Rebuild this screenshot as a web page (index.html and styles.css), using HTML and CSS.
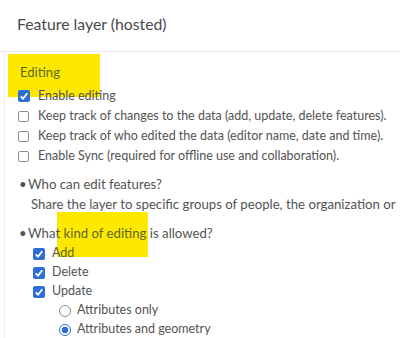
FILE: index.html
```html
<!DOCTYPE HTML>
<html>

<head>
    <meta charset="UTF-8">
    <title>Feature layer settings</title>
    <link rel="stylesheet" href="styles.css">
</head>

<body>
    <div class="title">Feature layer (hosted)</div>

    <div class="panel">
        <div class="section"><span class="hl">Editing</span></div>

        <div class="option">
            <span class="box checked"></span>
            <span>Enable editing</span>
        </div>
        <div class="option">
            <span class="box"></span>
            <span>Keep track of changes to the data (add, update, delete features).</span>
        </div>
        <div class="option">
            <span class="box"></span>
            <span>Keep track of who edited the data (editor name, date and time).</span>
        </div>
        <div class="option">
            <span class="box"></span>
            <span>Enable Sync (required for offline use and collaboration).</span>
        </div>

        <div class="question first">
            <div class="ask"><span class="dot">&bull;</span>Who can edit features?</div>
            <div class="note">Share the layer to specific groups of people, the organization or</div>
        </div>

        <div class="question">
            <div class="ask"><span class="dot">&bull;</span>What <span class="hl">kind of editing</span> is allowed?</div>
            <div class="sub">
                <div class="option">
                    <span class="box checked"></span>
                    <span>A<span class="hl">dd</span></span>
                </div>
                <div class="option">
                    <span class="box checked"></span>
                    <span>Delete</span>
                </div>
                <div class="option">
                    <span class="box checked"></span>
                    <span>Update</span>
                </div>
                <div class="sub">
                    <div class="option">
                        <span class="radio"></span>
                        <span>Attributes only</span>
                    </div>
                    <div class="option">
                        <span class="radio checked"></span>
                        <span>Attributes and geometry</span>
                    </div>
                </div>
            </div>
        </div>
    </div>

    <span class="marker marker-section"></span>
    <span class="marker marker-kind"></span>
</body>

</html>
```

FILE: styles.css
```css
body {
    margin: 0;
    width: 400px;
    height: 338px;
    overflow: hidden;
    position: relative;
    background: #fff;
    color: #535353;
    font-family: Lato, "Noto Sans", sans-serif;
}

.title {
    height: 52px;
    box-sizing: border-box;
    padding: 14px 0 0 17px;
    font-size: 15.8px;
    line-height: 20px;
    color: #4a4a4a;
    border-bottom: 1px solid #e9e9e9;
}

.panel {
    position: relative;
    z-index: 1;
    box-sizing: border-box;
    height: 286px;
    margin-left: 4px;
    padding: 10px 0 0 13px;
    border-left: 1px solid #eeeeee;
}

.hl {
    color: #5c6820;
}

.section {
    font-size: 13.1px;
    line-height: 20px;
    margin: 0 0 3px 2px;
}

.option {
    display: flex;
    align-items: center;
    height: 20px;
    font-size: 12.5px;
    white-space: nowrap;
}

.box {
    box-sizing: border-box;
    width: 11px;
    height: 11px;
    margin: 2px 9px 0 0;
    border: 1px solid #8c8c8c;
    border-radius: 2px;
    flex: none;
}

.box.checked {
    width: 12px;
    height: 12px;
    margin-right: 8px;
    border: none;
    background: #2d6ed8 url("data:image/svg+xml;utf8,<svg xmlns='http://www.w3.org/2000/svg' viewBox='0 0 12 12'><path d='M2.7 6.3 L5 8.6 L9.3 3.3' fill='none' stroke='white' stroke-width='1.8'/></svg>") no-repeat center;
}

.radio {
    box-sizing: border-box;
    width: 12px;
    height: 12px;
    margin: 2px 6px 0 0;
    border: 1px solid #8c8c8c;
    border-radius: 50%;
    flex: none;
}

.radio.checked {
    border-color: #2d6ed8;
    background: radial-gradient(circle, #2d6ed8 3px, #fff 3.6px);
}

.question {
    margin-top: 9px;
    font-size: 13.2px;
    line-height: 20px;
}

.dot {
    display: inline-block;
    width: 9px;
    margin-left: 1px;
}

.note {
    padding-left: 13px;
    white-space: nowrap;
}

.sub {
    padding-left: 15px;
}

.sub .option {
    height: 19px;
}

.sub .box.checked {
    margin-right: 7px;
}

.sub .sub {
    padding-left: 26px;
}

.marker {
    position: absolute;
    z-index: 0;
    background: #ffe800;
}

.marker-section {
    left: 8px;
    top: 54px;
    width: 92px;
    height: 43px;
}

.marker-kind {
    left: 57px;
    top: 212px;
    width: 91px;
    height: 45px;
}
```
